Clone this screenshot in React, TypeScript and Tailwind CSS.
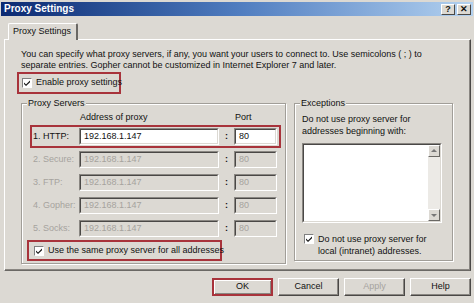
import React from 'react';

const Check = () => (
  <div className="w-[10px] h-[10px] bg-white border border-t-[#808080] border-l-[#808080] border-b-white border-r-white flex items-center justify-center shrink-0">
    <svg width="8" height="8" viewBox="0 0 8 8">
      <path d="M1 3.5 L3 5.5 L7 1.5 L7 3.2 L3 7 L1 5 Z" fill="#111" />
    </svg>
  </div>
);

function Field({ value, disabled, className = '' }: { value: string; disabled?: boolean; className?: string }) {
  return (
    <div
      className={`h-[17px] border border-t-[#8a8782] border-l-[#8a8782] border-b-white border-r-white ${
        disabled ? 'bg-[#dcd9d3] text-[#a6a39e]' : 'bg-white text-[#111]'
      } ${className}`}
    >
      <div className="h-full border border-t-[#4a4846] border-l-[#4a4846] border-b-[#dcd9d3] border-r-[#dcd9d3] pl-[3px] leading-[13px]">
        {value}
      </div>
    </div>
  );
}

function ProxyRow({ label, active }: { label: string; active?: boolean }) {
  return (
    <div
      className={`ml-[3px] w-[251px] border-2 py-px flex items-center ${
        active ? 'border-[#a8333b]' : 'border-transparent'
      }`}
    >
      <span className={`w-[47px] pl-px whitespace-nowrap ${active ? 'text-[#111]' : 'text-[#a6a39e]'}`}>{label}</span>
      <Field value="192.168.1.147" disabled={!active} className="w-[140px]" />
      <span className="w-[15px] text-center text-[#111] font-bold">:</span>
      <Field value="80" disabled={!active} className="w-[43px]" />
    </div>
  );
}

function Group({ title, className = '', children }: { title: string; className?: string; children: React.ReactNode }) {
  return (
    <div className={`relative border border-[#a19e98] shadow-[inset_1px_1px_0_#fff,1px_1px_0_#fff] ${className}`}>
      <span className="absolute -top-[7px] left-[5px] bg-[#dcd9d3] px-[1px] leading-[12px]">{title}</span>
      {children}
    </div>
  );
}

function Btn({ label, disabled, focus }: { label: string; disabled?: boolean; focus?: boolean }) {
  return (
    <div
      className={`w-[61px] h-[18px] flex items-center justify-center border ${
        focus
          ? 'border-2 border-[#a8333b] shadow-[inset_1px_1px_0_#fff,inset_-1px_-1px_0_#8a8782]'
          : 'border-t-white border-l-white border-b-[#4a4846] border-r-[#4a4846] shadow-[inset_-1px_-1px_0_#8a8782]'
      } ${disabled ? 'text-[#a6a39e]' : 'text-[#111]'}`}
    >
      {label}
    </div>
  );
}

export default function App() {
  return (
    <div className="w-[474px] h-[303px] overflow-hidden bg-[#dcd9d3] font-['Liberation_Sans',Arial,sans-serif] text-[9px] text-[#111] pt-[2px]">
      {/* title bar */}
      <div className="h-[14px] mx-[1px] bg-gradient-to-r from-[#0c2a72] via-[#4f7cbf] to-[#b4d2f0] flex items-center justify-between pl-[3px] pr-[2px]">
        <span className="text-white font-bold text-[10px] leading-none">Proxy Settings</span>
        <div className="flex gap-[2px]">
          <div className="w-[14px] h-[11px] bg-[#dcd9d3] border border-t-white border-l-white border-b-[#4a4846] border-r-[#4a4846] flex items-center justify-center font-bold text-[9px] leading-none">?</div>
          <div className="w-[14px] h-[11px] bg-[#dcd9d3] border border-t-white border-l-white border-b-[#4a4846] border-r-[#4a4846] flex items-center justify-center font-bold text-[9px] leading-none">✕</div>
        </div>
      </div>

      <div className="px-[4px] pt-[6px] w-[467px] box-content">
        {/* tab strip */}
        <div className="pl-[4px] flex">
          <div className="relative top-px h-[17px] w-[70px] bg-[#dcd9d3] border-t border-l border-t-white border-l-white border-r-2 border-r-[#6a6864] rounded-t-[2px] pl-[4px] leading-[15px] whitespace-nowrap">
            Proxy Settings
          </div>
        </div>

        {/* tab panel */}
        <div className="h-[232px] border border-t-white border-l-white border-b-[#6a6864] border-r-[#4a4846] shadow-[inset_-1px_-1px_0_#8a8782] pl-[16px] pt-[9px]">
          <p className="leading-[11px] whitespace-nowrap">
            You can specify what proxy servers, if any, you want your users to connect to. Use semicolons ( ; ) to
            <br />
            separate entries. Gopher cannot be customized in Internet Explorer 7 and later.
          </p>

          <div className="-ml-[4px] mt-[1px] w-[104px] h-[22px] border-2 border-[#a8333b] flex items-center gap-[4px] pl-[3px] whitespace-nowrap">
            <Check />
            <span>Enable proxy settings</span>
          </div>

          <div className="flex gap-[8px] mt-[9px]">
            <Group title="Proxy Servers" className="w-[265px] h-[161px] pl-[5px] pt-[8px]">
              <div className="flex leading-[11px]">
                <span className="ml-[53px] w-[155px]">Address of proxy</span>
                <span>Port</span>
              </div>
              <div className="mt-[2px]">
                <ProxyRow label="1. HTTP:" active />
                <ProxyRow label="2. Secure:" />
                <ProxyRow label="3. FTP:" />
                <ProxyRow label="4. Gopher:" />
                <ProxyRow label="5. Socks:" />
              </div>
              <div className="w-[195px] h-[21px] border-2 border-[#a8333b] flex items-center gap-[4px] pl-[5px] whitespace-nowrap">
                <Check />
                <span>Use the same proxy server for all addresses</span>
              </div>
            </Group>

            <Group title="Exceptions" className="w-[159px] h-[158px] pl-[7px] pt-[9px]">
              <p className="leading-[12px] whitespace-nowrap">
                Do not use proxy server for
                <br />
                addresses beginning with:
              </p>
              <div className="mt-[6px] w-[140px] h-[80px] border border-t-[#8a8782] border-l-[#8a8782] border-b-white border-r-white">
                <div className="h-full border border-t-[#4a4846] border-l-[#4a4846] border-b-[#dcd9d3] border-r-[#dcd9d3] bg-white flex justify-end">
                  <div className="w-[12px] h-full bg-[#eceae6] flex flex-col justify-between">
                    <div className="h-[12px] bg-[#dcd9d3] border border-t-white border-l-white border-b-[#6a6864] border-r-[#6a6864] flex items-center justify-center">
                      <svg width="6" height="4" viewBox="0 0 6 4"><path d="M3 0 L6 3 L0 3 Z" fill="#777" /></svg>
                    </div>
                    <div className="h-[12px] bg-[#dcd9d3] border border-t-white border-l-white border-b-[#6a6864] border-r-[#6a6864] flex items-center justify-center">
                      <svg width="6" height="4" viewBox="0 0 6 4"><path d="M0 1 L6 1 L3 4 Z" fill="#777" /></svg>
                    </div>
                  </div>
                </div>
              </div>
              <div className="mt-[10px] flex gap-[4px] pl-[2px]">
                <div className="pt-px">
                  <Check />
                </div>
                <p className="leading-[12px] whitespace-nowrap">
                  Do not use proxy server for
                  <br />
                  local (intranet) addresses.
                </p>
              </div>
            </Group>
          </div>
        </div>

        {/* buttons */}
        <div className="flex justify-end gap-[5px] mt-[7px]">
          <Btn label="OK" focus />
          <Btn label="Cancel" />
          <Btn label="Apply" disabled />
          <Btn label="Help" />
        </div>
      </div>
    </div>
  );
}
